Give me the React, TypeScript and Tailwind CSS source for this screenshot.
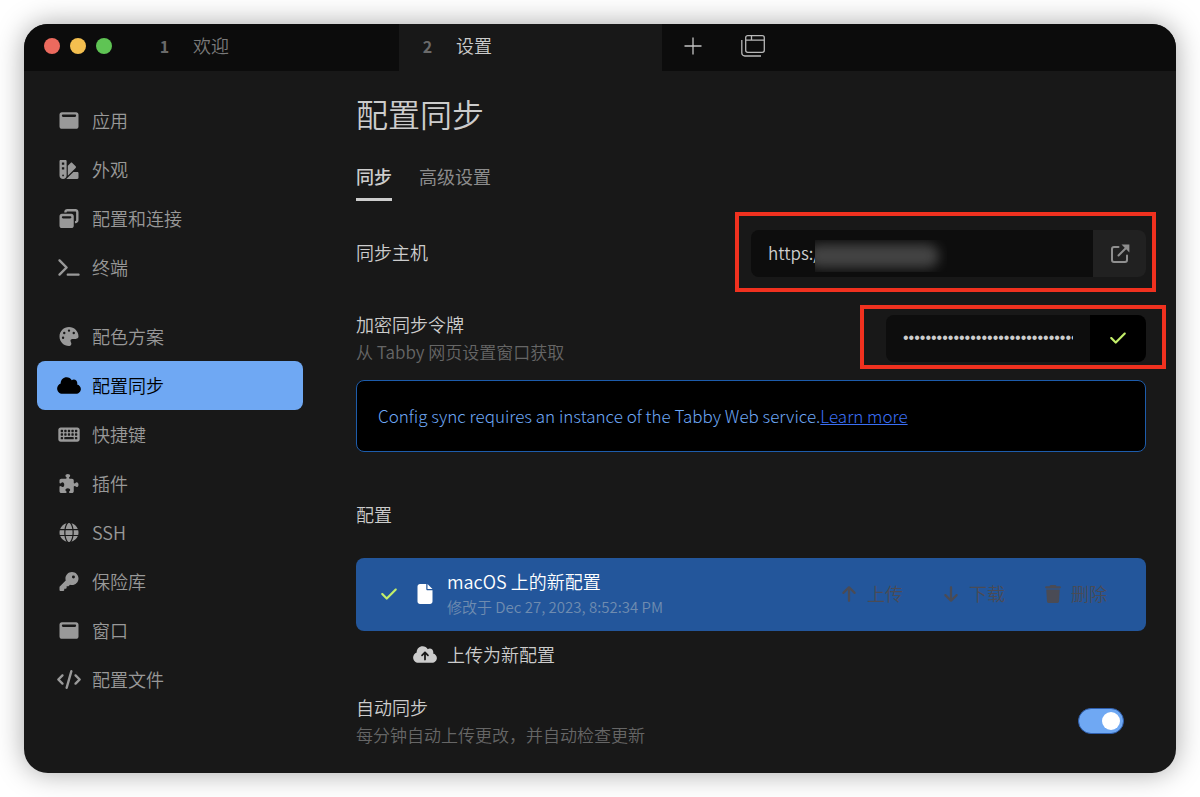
import { useState } from 'react';
import type { IconType } from 'react-icons';
import {
  FaArrowDown,
  FaArrowUp,
  FaCheck,
  FaCloud,
  FaCloudArrowUp,
  FaCode,
  FaFile,
  FaGlobe,
  FaKey,
  FaKeyboard,
  FaPalette,
  FaPuzzlePiece,
  FaSwatchbook,
  FaTerminal,
  FaTrash,
  FaWindowMaximize,
  FaWindowRestore,
} from 'react-icons/fa6';

type NavItem = { label: string; icon: IconType; active?: boolean };

const general: NavItem[] = [
  { label: '应用', icon: FaWindowMaximize },
  { label: '外观', icon: FaSwatchbook },
  { label: '配置和连接', icon: FaWindowRestore },
  { label: '终端', icon: FaTerminal },
];

const extra: NavItem[] = [
  { label: '配色方案', icon: FaPalette },
  { label: '配置同步', icon: FaCloud, active: true },
  { label: '快捷键', icon: FaKeyboard },
  { label: '插件', icon: FaPuzzlePiece },
  { label: 'SSH', icon: FaGlobe },
  { label: '保险库', icon: FaKey },
  { label: '窗口', icon: FaWindowMaximize },
  { label: '配置文件', icon: FaCode },
];

const actions = [
  { label: '上传', icon: FaArrowUp },
  { label: '下载', icon: FaArrowDown },
  { label: '删除', icon: FaTrash },
];

function NavGroup({ items }: { items: NavItem[] }) {
  return (
    <ul>
      {items.map(({ label, icon: Icon, active }) => (
        <li key={label}>
          <button
            type="button"
            className={`flex h-[49px] w-full items-center gap-[11px] rounded-lg px-5 text-left ${
              active ? 'bg-[#6fa8f3] text-black' : 'text-[#999999]'
            }`}
          >
            <Icon className="h-[19px] w-6" />
            {label}
          </button>
        </li>
      ))}
    </ul>
  );
}

function Tab({ index, title, active }: { index: number; title: string; active?: boolean }) {
  return (
    <button
      type="button"
      className={`flex w-[263px] items-center pb-1 text-left ${
        active ? 'bg-[#181818] text-[#cccccc]' : 'text-[#7a7a7a]'
      }`}
    >
      <span className="w-[57px] text-center text-base font-bold text-[#6a6a6a]">{index}</span>
      {title}
    </button>
  );
}

export default function App() {
  const [host, setHost] = useState('https://');
  const [token, setToken] = useState('0123456789abcdef0123456789abcdef');
  const [autoSync, setAutoSync] = useState(true);

  return (
    <div className="flex min-h-screen bg-white p-6 font-['Noto_Sans_CJK_SC',sans-serif] text-lg leading-[27px] font-[350]">
      <div className="flex flex-1 flex-col overflow-hidden rounded-3xl bg-[#181818] text-[#cccccc] shadow-[0_0_28px_rgba(0,0,0,0.35)]">
        {/* Title bar */}
        <header className="flex h-[47px] bg-[#0c0c0c]">
          <div className="flex w-28 items-center gap-[10px] pb-[3px] pl-5">
            <span className="size-4 rounded-full bg-[#ec6a5e]" />
            <span className="size-4 rounded-full bg-[#f4bf4f]" />
            <span className="size-4 rounded-full bg-[#5fc454]" />
          </div>
          <Tab index={1} title="欢迎" />
          <Tab index={2} title="设置" active />
          <button type="button" aria-label="新标签页" className="flex w-[61px] items-center justify-center pb-[3px]">
            <svg viewBox="0 0 18 18" className="size-[18px]" stroke="#c4c4c4" strokeWidth="1.3">
              <path d="M9 .5v17M.5 9h17" />
            </svg>
          </button>
          <button type="button" aria-label="配置和连接" className="flex w-[60px] items-center justify-center pb-[3px]">
            <svg viewBox="0 0 24 22" className="h-[22px] w-6" fill="none" stroke="#b8b8b8" strokeWidth="1.3">
              <rect x="4.7" y="0.7" width="18.6" height="16.6" rx="2" />
              <path d="M4.7 5.2h18.6M10.5 1v4" />
              <path d="M.8 5v13a3 3 0 0 0 3 3H20" />
            </svg>
          </button>
        </header>

        <div className="flex flex-1">
          <nav className="flex w-[279px] shrink-0 flex-col gap-5 pt-[25px] pl-[13px]">
            <NavGroup items={general} />
            <NavGroup items={extra} />
          </nav>

          <main className="min-w-0 flex-1 pt-[22px] pr-[30px] pb-6 pl-[53px]">
            <h1 className="text-[32px] leading-10">配置同步</h1>

            <div className="mt-[29px] flex gap-[27px]">
              <button type="button" className="border-b-3 border-[#cccccc] pb-2 leading-7 font-medium">
                同步
              </button>
              <button type="button" className="border-b-3 border-transparent pb-2 leading-7 font-normal text-[#8c8c8c]">
                高级设置
              </button>
            </div>

            {/* Sync host */}
            <div className="mt-[29px] flex items-center justify-between">
              <label htmlFor="host" className="pb-0.5">
                同步主机
              </label>
              <div className="relative flex h-[47px] w-[395px]">
                <input
                  id="host"
                  type="text"
                  value={host}
                  onChange={(e) => setHost(e.target.value)}
                  className="min-w-0 flex-1 rounded-l-lg bg-[#0d0d0d] px-[17px] pb-0.5 text-[17px] outline-none"
                />
                <button
                  type="button"
                  aria-label="打开"
                  className="flex w-[53px] items-center justify-center rounded-r-lg bg-[#212121] text-[#8f8f8f]"
                >
                  <svg viewBox="0 0 20 20" className="size-5" fill="none" stroke="currentColor" strokeWidth="2">
                    <path d="M8.5 3H4a2 2 0 0 0-2 2v11a2 2 0 0 0 2 2h11a2 2 0 0 0 2-2v-4.5" strokeLinecap="round" />
                    <path d="M8.5 11.5 16 4" strokeLinecap="round" />
                    <path d="M11.5.6h7.9v7.9z" fill="currentColor" stroke="none" />
                  </svg>
                </button>
                {/* redacted part of the address */}
                <div className="absolute top-[10px] left-16 h-8 w-[132px] overflow-hidden bg-[#0d0d0d]">
                  <div className="mt-1 -ml-2 h-6 w-[132px] rounded-xl bg-[#444444] blur-[6px]" />
                </div>
                <div className="pointer-events-none absolute -top-[18px] -right-[10px] -bottom-[15px] -left-4 border-4 border-[#f0311f]" />
              </div>
            </div>

            {/* Sync token */}
            <div className="mt-[34px] flex items-center justify-between">
              <div className="pb-1">
                <label htmlFor="token" className="block">
                  加密同步令牌
                </label>
                <p className="text-[17px] text-[#666666]">从 Tabby 网页设置窗口获取</p>
              </div>
              <div className="relative -mt-1 flex h-[47px] w-[260px]">
                <input
                  id="token"
                  type="password"
                  value={token}
                  onChange={(e) => setToken(e.target.value)}
                  className="min-w-0 flex-1 rounded-l-lg bg-[#0d0d0d] px-[17px] font-['Liberation_Sans',sans-serif] text-base outline-none"
                />
                <div className="flex w-14 items-center justify-center rounded-r-lg bg-black text-[#c3ee6a]">
                  <FaCheck className="size-[18px]" />
                </div>
                <div className="pointer-events-none absolute -top-[10px] -right-5 -bottom-[7px] -left-[26px] border-4 border-[#f0311f]" />
              </div>
            </div>

            <div className="mt-[11px] flex h-[72px] items-center rounded-lg border border-[#1d5cab] bg-black px-[21px] text-[17px] font-light text-[#6ea8f7]">
              <p className="pb-0.5">
                Config sync requires an instance of the Tabby Web service.
                <a href="#tabby-web" className="text-[#3b6ff5] underline">
                  Learn more
                </a>
              </p>
            </div>

            {/* Stored configs */}
            <h2 className="mt-[49px]">配置</h2>
            <div className="mt-[30px] flex h-[73px] items-center rounded-lg bg-[#23569b] pr-[19px] pb-0.5 pl-6">
              <FaCheck className="size-[18px] text-[#c3ee6a]" />
              <FaFile className="ml-[15px] h-5 w-6 text-white" />
              <div className="ml-[10px] flex-1">
                <p className="text-white">macOS 上的新配置</p>
                <p className="text-[15px] leading-6 text-[#6f8cb0]">修改于 Dec 27, 2023, 8:52:34 PM</p>
              </div>
              {actions.map(({ label, icon: Icon }) => (
                <button key={label} type="button" className="flex items-center gap-[10px] px-5 text-[#4a4b55]">
                  <Icon className="h-[18px] w-4" />
                  {label}
                </button>
              ))}
            </div>
            <button type="button" className="flex h-[49px] w-full items-center gap-[10px] pb-0.5 pl-[57px] text-left">
              <FaCloudArrowUp className="h-[19px] w-6" />
              上传为新配置
            </button>

            {/* Auto sync */}
            <div className="mt-[14px] flex items-center justify-between">
              <div>
                <label htmlFor="auto-sync" className="block">
                  自动同步
                </label>
                <p className="text-[17px] text-[#666666]">每分钟自动上传更改，并自动检查更新</p>
              </div>
              <input
                id="auto-sync"
                type="checkbox"
                role="switch"
                checked={autoSync}
                onChange={(e) => setAutoSync(e.target.checked)}
                className="mr-[22px] flex h-[26px] w-[46px] appearance-none items-center rounded-full border border-[#2f5fae] bg-[#333333] px-[3px] before:size-[18px] before:rounded-full before:bg-white checked:justify-end checked:bg-[#6fa8f3]"
              />
            </div>
          </main>
        </div>
      </div>
    </div>
  );
}
